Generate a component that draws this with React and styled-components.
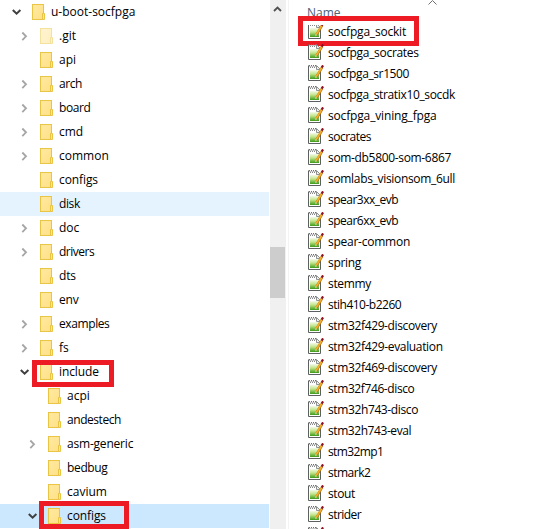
import React from "react";
import styled, { createGlobalStyle } from "styled-components";

const GlobalStyle = createGlobalStyle`
  body { margin: 0; background: #fff; overflow: hidden; }
`;

const Window = styled.main`
  display: flex;
  width: 539px;
  height: 529px;
  overflow: hidden;
  background: #fff;
  color: #000;
  font: 12px/16px "Open Sans", "Noto Sans", sans-serif;
`;

const TreePane = styled.nav`
  width: 269px;
  flex: none;
`;

const TreeRow = styled.div`
  position: relative;
  display: flex;
  align-items: center;
  height: 24px;
  padding-left: ${(p) => p.$indent}px;
  background: ${(p) => p.$bg || "transparent"};
`;

const Toggle = styled.span`
  display: flex;
  width: 20px;
  height: 24px;
`;

const Label = styled.span`
  white-space: pre;
  letter-spacing: ${(p) => p.$track || 0}px;
`;

const TreeLabel = styled(Label)`
  margin-left: 5px;
`;

const Highlight = styled.span`
  position: absolute;
  box-sizing: border-box;
  left: ${(p) => p.$x}px;
  top: ${(p) => p.$y}px;
  width: ${(p) => p.$w}px;
  height: ${(p) => p.$h}px;
  border: 5px solid #ed1c24;
`;

const ScrollTrack = styled.div`
  width: 16px;
  margin-left: 1px;
  flex: none;
  background: #f0f0f0;
  display: flex;
  flex-direction: column;
`;

const ScrollThumb = styled.div`
  width: 15px;
  height: 51px;
  margin-top: 230px;
  background: #cdcdcd;
`;

const FilePane = styled.section`
  flex: 1;
  margin-left: 2px;
  border-left: 1px solid #f3f3f3;
`;

const Header = styled.header`
  display: flex;
  height: 21px;
  padding-left: 18px;
  color: #4c607a;
`;

const HeaderLabel = styled(Label)`
  width: 121px;
  margin-top: 5px;
  height: 16px;
`;

const FileRow = styled.div`
  position: relative;
  display: flex;
  align-items: center;
  height: 21px;
  padding-left: 19px;
`;

const FileLabel = styled(Label)`
  margin-left: 3px;
  padding-top: 1px;
`;

const Svg = styled.svg`
  display: block;
  flex: none;
`;

function Folder({ faded }) {
  return (
    <Svg width="14" height="16" opacity={faded ? 0.5 : 1}>
      <defs>
        <linearGradient id="folderFill" x1="0" y1="0" x2="1" y2="1">
          <stop offset="0" stopColor="#ffe9a2" />
          <stop offset="1" stopColor="#ffe185" />
        </linearGradient>
      </defs>
      <rect x=".5" y=".5" width="11" height="15" fill="url(#folderFill)" stroke="#e9c543" />
      <path d="M10.5 15.5V9.5H12.5V15.5Z" fill="#ffe690" stroke="#e9c543" />
    </Svg>
  );
}

function TreeChevron({ open }) {
  return (
    <Svg width="20" height="24">
      {open ? (
        <path d="M.8 10L4.6 13.7L8.4 10" fill="none" stroke="#404040" strokeWidth="2" />
      ) : (
        <path d="M2.3 8.5L6 12.3L2.3 16.1" fill="none" stroke="#a6a6a6" strokeWidth="1.8" />
      )}
    </Svg>
  );
}

function FileIcon({ clipped }) {
  return (
    <Svg width="17" height="17">
      <defs>
        <linearGradient id="sheetFill" x1="0" y1="0" x2="0" y2="1">
          <stop offset="0" stopColor="#f4faea" />
          <stop offset=".45" stopColor="#c0e48a" />
          <stop offset="1" stopColor="#3d9a16" />
        </linearGradient>
      </defs>
      <path d="M.5 1V15.5H12.5V4.5L9 1Z" fill="#fff" />
      <path d="M.5 .5V15.5H12.5V4" fill="none" stroke="#5c6060" />
      <path d="M1 .5H9" stroke="#6d7070" strokeDasharray="1 1" />
      <path d="M1 1.5H9" stroke="#c4c4c4" />
      <path d="M2 2.5H8" stroke="#888" strokeDasharray="1 1" />
      <path d="M8.5 .5V4.5H12.5Z" fill="#eee" stroke="#858888" strokeWidth=".9" />
      <rect x="2" y="5" width="9" height="9" fill="url(#sheetFill)" />
      <path d="M8.5 11.7L14 2.7" stroke="#a86808" strokeWidth="2.4" />
      <path d="M8.3 11.5L13.8 2.5" stroke="#f6ad27" strokeWidth="1.7" />
      <path d="M7.3 13.3L7.5 11L9.2 12Z" fill="#ead5a1" />
      <path d="M13.6 2.7L15.1 .4" stroke="#8b1020" strokeWidth="2.2" />
      {clipped && <rect width="17" height="2" fill="#fff" />}
    </Svg>
  );
}

const folders = [
  { name: "u-boot-socfpga", level: 0, open: true },
  { name: ".git", closed: true, faded: true },
  { name: "api" },
  { name: "arch", closed: true, track: -0.4 },
  { name: "board", closed: true, track: -0.4 },
  { name: "cmd", closed: true },
  { name: "common", closed: true },
  { name: "configs", track: -0.1 },
  { name: "disk", bg: "#e5f3ff", track: -0.4 },
  { name: "doc", closed: true },
  { name: "drivers", closed: true, track: -0.5 },
  { name: "dts", track: -0.2 },
  { name: "env", track: -0.2 },
  { name: "examples", closed: true, track: -0.4 },
  { name: "fs", closed: true },
  { name: "include", open: true, track: -0.1, box: { $x: 32, $y: 0, $w: 82, $h: 27 } },
  { name: "acpi", level: 2 },
  { name: "andestech", level: 2, track: -0.45 },
  { name: "asm-generic", level: 2, closed: true, track: -0.2 },
  { name: "bedbug", level: 2, track: -0.35 },
  { name: "cavium", level: 2 },
  { name: "configs", level: 2, open: true, track: -0.1, bg: "#cce8ff", box: { $x: 39, $y: -3, $w: 90, $h: 28 } },
];

const files = [
  ["socfpga_sockit", -0.2],
  ["socfpga_socrates", -0.3],
  ["socfpga_sr1500", -0.4],
  ["socfpga_stratix10_socdk", -0.35],
  ["socfpga_vining_fpga", -0.16],
  ["socrates", -0.5],
  ["som-db5800-som-6867", -0.33],
  ["somlabs_visionsom_6ull", -0.32],
  ["spear3xx_evb", -0.5],
  ["spear6xx_evb", -0.5],
  ["spear-common", -0.25],
  ["spring", -0.33],
  ["stemmy", -0.33],
  ["stih410-b2260", -0.5],
  ["stm32f429-discovery", -0.37],
  ["stm32f429-evaluation", -0.35],
  ["stm32f469-discovery", -0.37],
  ["stm32f746-disco", -0.4],
  ["stm32h743-disco", -0.38],
  ["stm32h743-eval", -0.43],
  ["stm32mp1", -0.6],
  ["stmark2", -0.5],
  ["stout", -0.4],
  ["strider", -0.55],
];

export default function App() {
  return (
    <>
      <GlobalStyle />
      <Window>
        <TreePane>
          {folders.map(({ name, level = 1, open, closed, faded, bg, track, box }, i) => (
            <TreeRow key={i} $indent={12 + level * 8} $bg={bg}>
              <Toggle>{(open || closed) && <TreeChevron open={open} />}</Toggle>
              <Folder faded={faded} />
              <TreeLabel $track={track}>{name}</TreeLabel>
              {box && <Highlight {...box} />}
            </TreeRow>
          ))}
        </TreePane>
        <ScrollTrack>
          <Svg width="15" height="17">
            <path d="M4 11L7.5 7.5L11 11" fill="none" stroke="#505050" strokeWidth="1.8" />
          </Svg>
          <ScrollThumb />
        </ScrollTrack>
        <FilePane>
          <Header>
            <HeaderLabel>Name</HeaderLabel>
            <Svg width="10" height="6">
              <path d="M.5 4.5L4.5 .5L8.5 4.5" fill="none" stroke="#707070" />
            </Svg>
          </Header>
          {files.map(([name, track], i) => (
            <FileRow key={name}>
              <FileIcon clipped={i === 0} />
              <FileLabel $track={track}>{name}</FileLabel>
              {i === 0 && <Highlight $x={9} $y={-5} $w={121} $h={30} />}
            </FileRow>
          ))}
          <FileRow>
            <FileIcon />
          </FileRow>
        </FilePane>
      </Window>
    </>
  );
}
